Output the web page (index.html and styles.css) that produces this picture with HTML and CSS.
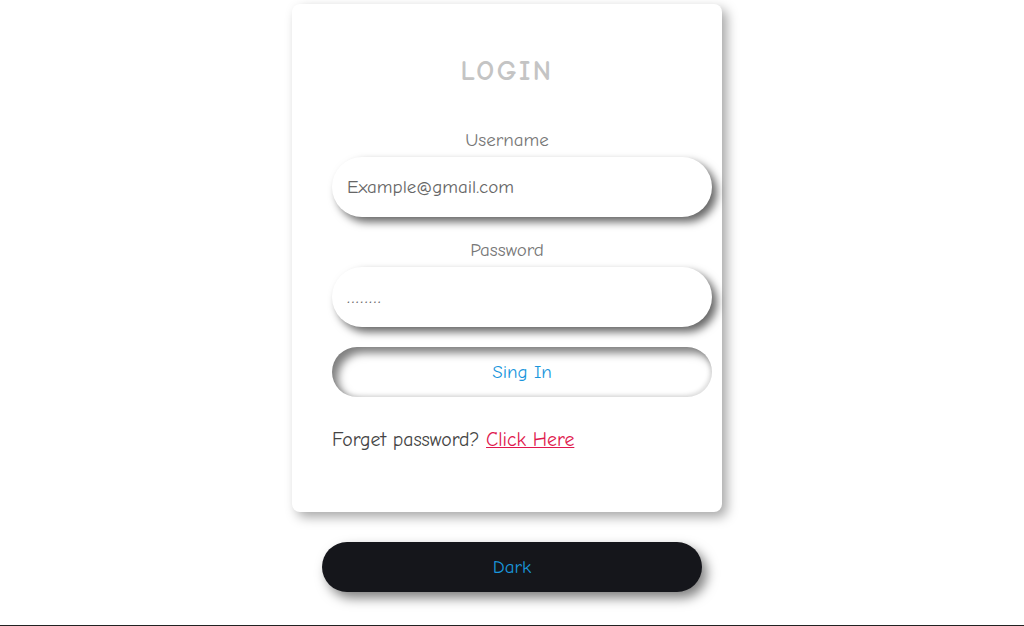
FILE: index.html
```html
<!DOCTYPE html>
<html lang="en">
<head>
<meta charset="utf-8">
<title>Login</title>
<link rel="stylesheet" href="styles.css">
</head>
<body>
<main class="page">
  <form class="card">
    <h1 class="title">LOGIN</h1>
    <label class="label" for="user">Username</label>
    <input class="field" id="user" type="text" placeholder="Example@gmail.com">
    <label class="label label-pass" for="pass">Password</label>
    <input class="field field-pass" id="pass" type="text" placeholder="........">
    <button class="signin" type="button">Sing In</button>
    <p class="forget">Forget password? <a href="#" class="link">Click Here</a></p>
  </form>
  <button class="dark" type="button">Dark</button>
</main>
<footer class="strip"></footer>
</body>
</html>
```
FILE: styles.css
```css
* { box-sizing: border-box; }
html, body { margin: 0; padding: 0; background: #fff; }
body {
  font-family: "Comic Sans MS", "Comic Neue", "Noto Sans", "DejaVu Sans", sans-serif;
  overflow: hidden;
}
.page {
  display: flex;
  flex-direction: column;
  align-items: center;
  padding-top: 4px;
}
.card {
  width: 430px;
  margin-right: 10px;
  background: #fff;
  border-radius: 8px;
  box-shadow: 5px 5px 12px rgba(0,0,0,0.35);
  padding: 52px 40px 60px 40px;
  display: flex;
  flex-direction: column;
}
.title {
  margin: 0;
  text-align: center;
  font-size: 28px;
  line-height: 30px;
  font-weight: bold;
  letter-spacing: 2.5px;
  color: #c4c4c4;
}
.label {
  display: block;
  text-align: center;
  font-size: 19px;
  line-height: 24px;
  color: #777;
  margin-top: 42px;
  margin-bottom: 5px;
}
.label-pass { margin-top: 21px; }
.field {
  width: 380px;
  height: 60px;
  border: none;
  outline: none;
  border-radius: 30px;
  background: #fff;
  padding: 0 15px;
  font-family: inherit;
  font-size: 19px;
  color: #666;
  box-shadow: 5px 5px 8px rgba(0,0,0,0.6);
}
.field-pass { letter-spacing: 1.5px; }
.field::placeholder { color: #666; opacity: 1; }
.signin {
  width: 380px;
  height: 50px;
  margin-top: 20px;
  border: none;
  border-radius: 25px;
  background: #fff;
  font-family: inherit;
  font-size: 19px;
  color: #1a96dc;
  box-shadow: inset 6px 6px 8px rgba(0,0,0,0.5), inset -2px -2px 4px rgba(0,0,0,0.12);
}
.forget {
  margin: 31px 0 0 0;
  font-size: 19.8px;
  line-height: 24px;
  color: #444;
  white-space: nowrap;
}
.link { color: #e0174d; text-decoration: underline; }
.dark {
  width: 380px;
  height: 50px;
  margin-top: 30px;
  border: none;
  border-radius: 25px;
  background: #15161b;
  color: #1a96dc;
  font-family: inherit;
  font-size: 19px;
  box-shadow: 5px 6px 12px rgba(0,0,0,0.5);
}
.strip {
  margin-top: 33px;
  height: 1px;
  background: #222;
}
```
